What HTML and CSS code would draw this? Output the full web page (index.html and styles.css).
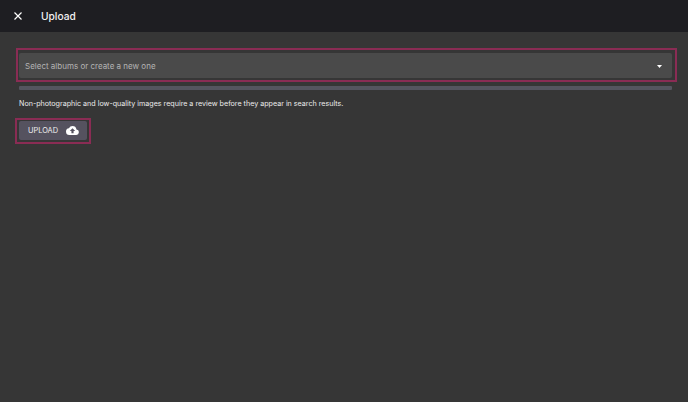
FILE: index.html
```html
<!DOCTYPE html>
<html lang="en">
<head>
<meta charset="utf-8">
<title>Upload</title>
<link rel="stylesheet" href="styles.css">
</head>
<body>
<header class="topbar">
  <svg class="close" width="8" height="8" viewBox="0 0 8 8"><path d="M.5.5l7 7M7.5.5l-7 7" stroke="#fff" stroke-width="1.2" fill="none"/></svg>
  <h1 class="title">Upload</h1>
</header>
<main class="content">
  <div class="mark mark-select">
    <div class="select">
      <span class="placeholder">Select albums or create a new one</span>
      <svg class="caret" width="5" height="3" viewBox="0 0 5 3"><path d="M0 0h5L2.5 3z" fill="#fff"/></svg>
    </div>
  </div>
  <div class="progress"></div>
  <p class="note">Non-photographic and low-quality images require a review before they appear in search results.</p>
  <div class="mark mark-button">
    <button class="upload" type="button">
      <span>UPLOAD</span>
      <svg width="13" height="9" viewBox="0 0 24 16" preserveAspectRatio="none"><path fill-rule="evenodd" d="M19.35 6.04A7.49 7.49 0 0 0 12 0a7.5 7.5 0 0 0-6.65 4.04A6 6 0 0 0 6 16h13a5 5 0 0 0 .35-9.96zM14 9v4h-4V9H7l5-5 5 5h-3z" fill="#fff"/></svg>
    </button>
  </div>
</main>
</body>
</html>
```
FILE: styles.css
```css
* { box-sizing: border-box; }
html, body { height: 100%; }
body {
  margin: 0;
  background: #363636;
  color: #fff;
  font-family: Inter, "Liberation Sans", sans-serif;
  overflow: hidden;
}
.topbar {
  height: 32px;
  background: #1e1e22;
  display: flex;
  align-items: center;
  padding-left: 14px;
}
.close { flex: none; margin-top: -1px; }
.title {
  margin: -1px 0 0 19px;
  font-size: 10.2px;
  font-weight: 500;
  color: #f2f2f2;
}
.content {
  padding: 16px 12px 0 15px;
  display: flex;
  flex-direction: column;
  align-items: flex-start;
}
.mark { border: 2px solid #8a2c54; }
.mark-select {
  width: 661px;
  height: 34px;
  margin-left: 1px;
  padding: 3px 3px 2px 1px;
}
.select {
  height: 25px;
  background: #4a4a4a;
  border-radius: 2px;
  display: flex;
  align-items: center;
  justify-content: space-between;
  padding: 1px 10px 0 6px;
}
.placeholder {
  font-size: 8px;
  color: #b4b4b4;
}
.progress {
  width: 653px;
  height: 4px;
  margin: 4px 0 0 4px;
  background: #55555f;
  border-radius: 1px;
}
.note {
  margin: 9px 0 0 4px;
  font-size: 7.15px;
  line-height: 10px;
  color: #ececec;
}
.mark-button {
  width: 76px;
  height: 26px;
  margin-top: 9px;
  padding: 1px 2px 2px;
}
.upload {
  width: 68px;
  height: 19px;
  padding: 0 8px 0 9px;
  border: 0;
  border-radius: 2px;
  background: #55525f;
  color: #f0f0f0;
  font: 400 7.4px Inter, "Liberation Sans", sans-serif;
  display: flex;
  align-items: center;
  justify-content: space-between;
}
```
